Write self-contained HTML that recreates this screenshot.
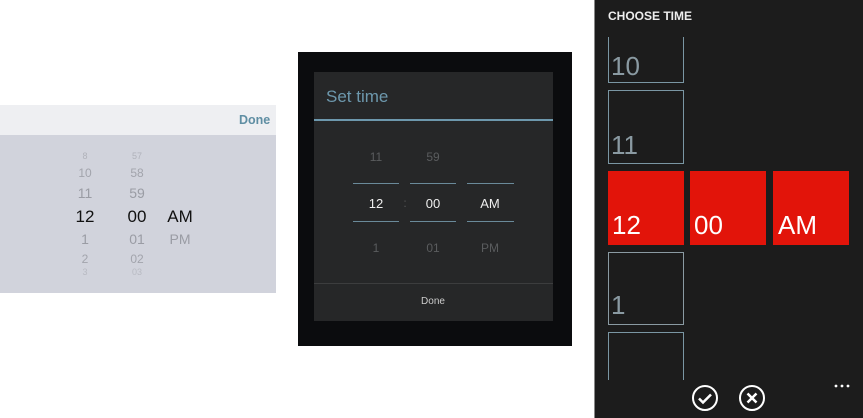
<!DOCTYPE html>
<html><head><meta charset="utf-8"><style>
*{margin:0;padding:0;box-sizing:border-box}
body{width:863px;height:418px;background:#fff;position:relative;overflow:hidden;font-family:"Liberation Sans",sans-serif}
.a{position:absolute}
.c{position:absolute;text-align:center;transform:translateX(-50%)}
</style></head><body>
<!-- iOS -->
<div class="a" style="left:0;top:105px;width:276px;height:30px;background:#eeeff2"></div>
<div class="a" style="left:239px;top:113px;font-size:12.5px;font-weight:bold;color:#5f8ea3">Done</div>
<div class="a" style="left:0;top:135px;width:276px;height:158px;background:#d1d3dc"></div>
<div class="c" style="left:85px;top:151px;font-size:9px;color:#b0b2ba">8</div>
<div class="c" style="left:137px;top:151px;font-size:9px;color:#b0b2ba">57</div>
<div class="c" style="left:85px;top:166px;font-size:12px;color:#a2a4ac">10</div>
<div class="c" style="left:137px;top:166px;font-size:12px;color:#a2a4ac">58</div>
<div class="c" style="left:85px;top:185px;font-size:14px;color:#9a9ca4">11</div>
<div class="c" style="left:137px;top:185px;font-size:14px;color:#9a9ca4">59</div>
<div class="c" style="left:85px;top:207px;font-size:17px;color:#111">12</div>
<div class="c" style="left:137px;top:207px;font-size:17px;color:#111">00</div>
<div class="c" style="left:180px;top:207px;font-size:17px;color:#111">AM</div>
<div class="c" style="left:85px;top:231px;font-size:14px;color:#9a9ca4">1</div>
<div class="c" style="left:137px;top:231px;font-size:14px;color:#9a9ca4">01</div>
<div class="c" style="left:180px;top:231px;font-size:14px;color:#9a9ca4">PM</div>
<div class="c" style="left:85px;top:252px;font-size:12px;color:#a2a4ac">2</div>
<div class="c" style="left:137px;top:252px;font-size:12px;color:#a2a4ac">02</div>
<div class="c" style="left:85px;top:267px;font-size:9px;color:#b8bac2">3</div>
<div class="c" style="left:137px;top:267px;font-size:9px;color:#b8bac2">03</div>
<!-- Android -->
<div class="a" style="left:298px;top:52px;width:274px;height:294px;background:#0b0c0e"></div>
<div class="a" style="left:314px;top:72px;width:239px;height:249px;background:#262728"></div>
<div class="a" style="left:326px;top:87px;font-size:17px;color:#6d98ad">Set time</div>
<div class="a" style="left:314px;top:119px;width:239px;height:2px;background:#6d98ad"></div>
<div class="c" style="left:376px;top:150px;font-size:12px;color:#5a5c5e">11</div>
<div class="c" style="left:433px;top:150px;font-size:12px;color:#5a5c5e">59</div>
<div class="a" style="left:353px;top:183px;width:46px;height:1px;background:#6a8a9a"></div>
<div class="a" style="left:410px;top:183px;width:46px;height:1px;background:#6a8a9a"></div>
<div class="a" style="left:467px;top:183px;width:47px;height:1px;background:#6a8a9a"></div>
<div class="c" style="left:376px;top:196px;font-size:13px;color:#eee">12</div>
<div class="c" style="left:405px;top:196px;font-size:12px;color:#555">:</div>
<div class="c" style="left:433px;top:196px;font-size:13px;color:#eee">00</div>
<div class="c" style="left:490px;top:196px;font-size:13px;color:#eee">AM</div>
<div class="a" style="left:353px;top:221px;width:46px;height:1px;background:#6a8a9a"></div>
<div class="a" style="left:410px;top:221px;width:46px;height:1px;background:#6a8a9a"></div>
<div class="a" style="left:467px;top:221px;width:47px;height:1px;background:#6a8a9a"></div>
<div class="c" style="left:376px;top:241px;font-size:12px;color:#5a5c5e">1</div>
<div class="c" style="left:433px;top:241px;font-size:12px;color:#5a5c5e">01</div>
<div class="c" style="left:490px;top:241px;font-size:12px;color:#5a5c5e">PM</div>
<div class="a" style="left:314px;top:283px;width:239px;height:1px;background:#3c3d3e"></div>
<div class="c" style="left:433px;top:296px;font-size:10px;color:#ccc">Done</div>
<!-- WP -->
<div class="a" style="left:594px;top:0;width:269px;height:418px;background:#1c1c1c;border-left:1px solid #888"></div>
<div class="a" style="left:608px;top:9px;font-size:12px;font-weight:bold;color:#eee">CHOOSE TIME</div>
<div class="a" style="left:608px;top:37px;width:76px;height:46px;border:1px solid #7a96a3;border-top:none"></div>
<div class="a" style="left:611px;top:51px;font-size:26px;color:#8a9aa2">10</div>
<div class="a" style="left:608px;top:90px;width:76px;height:74px;border:1px solid #7a96a3"></div>
<div class="a" style="left:611px;top:130px;font-size:26px;color:#8a9aa2">11</div>
<div class="a" style="left:608px;top:171px;width:76px;height:74px;background:#e2140a"></div>
<div class="a" style="left:690px;top:171px;width:76px;height:74px;background:#e2140a"></div>
<div class="a" style="left:773px;top:171px;width:76px;height:74px;background:#e2140a"></div>
<div class="a" style="left:612px;top:210px;font-size:26px;color:#fff">12</div>
<div class="a" style="left:694px;top:210px;font-size:26px;color:#fff">00</div>
<div class="a" style="left:778px;top:210px;font-size:26px;color:#fff">AM</div>
<div class="a" style="left:608px;top:252px;width:76px;height:73px;border:1px solid #8a9aa2"></div>
<div class="a" style="left:611px;top:290px;font-size:26px;color:#8a9aa2">1</div>
<div class="a" style="left:608px;top:332px;width:76px;height:48px;border:1px solid #7a96a3;border-bottom:none"></div>
<svg class="a" style="left:690px;top:384px" width="80" height="28">
<circle cx="15" cy="14" r="12" fill="none" stroke="#fff" stroke-width="2"/>
<path d="M9 14.5l4 4 8-8" fill="none" stroke="#fff" stroke-width="2.5"/>
<circle cx="62" cy="14" r="12" fill="none" stroke="#fff" stroke-width="2"/>
<path d="M57.5 9.5l9 9M66.5 9.5l-9 9" stroke="#fff" stroke-width="2.5"/>
</svg>
<svg class="a" style="left:834px;top:383px" width="20" height="6">
<circle cx="2" cy="3" r="1.4" fill="#fff"/><circle cx="8" cy="3" r="1.4" fill="#fff"/><circle cx="14" cy="3" r="1.4" fill="#fff"/>
</svg>
</body></html>
